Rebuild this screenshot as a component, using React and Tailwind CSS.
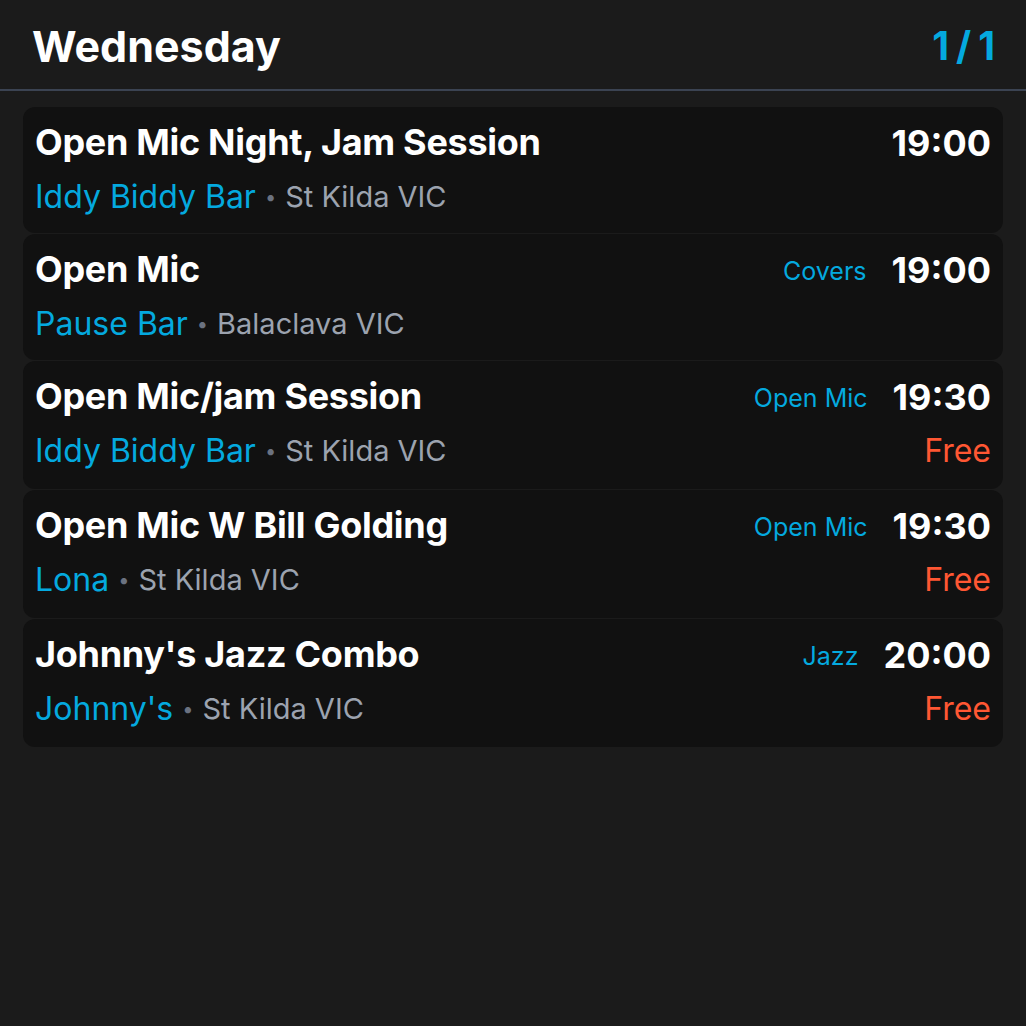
const events = [
  { title: "Open Mic Night, Jam Session", venue: "Iddy Biddy Bar", place: "St Kilda VIC", time: "19:00" },
  { title: "Open Mic", venue: "Pause Bar", place: "Balaclava VIC", time: "19:00", tag: "Covers" },
  { title: "Open Mic/jam Session", venue: "Iddy Biddy Bar", place: "St Kilda VIC", time: "19:30", tag: "Open Mic", price: "Free" },
  { title: "Open Mic W Bill Golding", venue: "Lona", place: "St Kilda VIC", time: "19:30", tag: "Open Mic", price: "Free" },
  { title: "Johnny's Jazz Combo", venue: "Johnny's", place: "St Kilda VIC", time: "20:00", tag: "Jazz", price: "Free" },
];

function EventCard({ ev }) {
  return (
    <div className={`bg-[#111111] rounded-xl px-3 pt-[9px] ${ev.price ? "h-[128px]" : "h-[126px]"}`}>
      <div className="flex items-center justify-between h-[52px]">
        <p className="text-[36px] font-bold text-white tracking-[-0.3px]">{ev.title}</p>
        <div className="flex items-center gap-[25px]">
          {ev.tag && <span className="text-[25px] text-[#04a9df] pt-[5px]">{ev.tag}</span>}
          <span className="text-[36px] font-bold text-white pt-[2px]">{ev.time}</span>
        </div>
      </div>
      <div className="flex items-center justify-between h-[52px] pt-[5px]">
        <p className="flex items-center">
          <span className="text-[32px] text-[#04a9df]">{ev.venue}</span>
          <span className="text-[#6b7280] text-[20px] mx-[9px]">•</span>
          <span className="text-[29px] text-[#9ca3af]">{ev.place}</span>
        </p>
        {ev.price && <span className="text-[32px] text-[#ff5733]">{ev.price}</span>}
      </div>
    </div>
  );
}

export default function App() {
  return (
    <div className="min-h-[1026px] bg-[#1b1b1b] font-['Inter',sans-serif]">
      <div className="flex items-center justify-between h-[91px] pl-[32px] pr-[31px] pt-[4px] border-b-2 border-[#3b4352]">
        <h1 className="text-[43px] font-bold text-white">Wednesday</h1>
        <span className="text-[39px] font-bold text-[#04a9df]">1<span className="mx-[7px]">/</span>1</span>
      </div>
      <div className="px-[23px] pt-[16px] flex flex-col gap-px">
        {events.map((ev, i) => (
          <EventCard key={i} ev={ev} />
        ))}
      </div>
    </div>
  );
}
